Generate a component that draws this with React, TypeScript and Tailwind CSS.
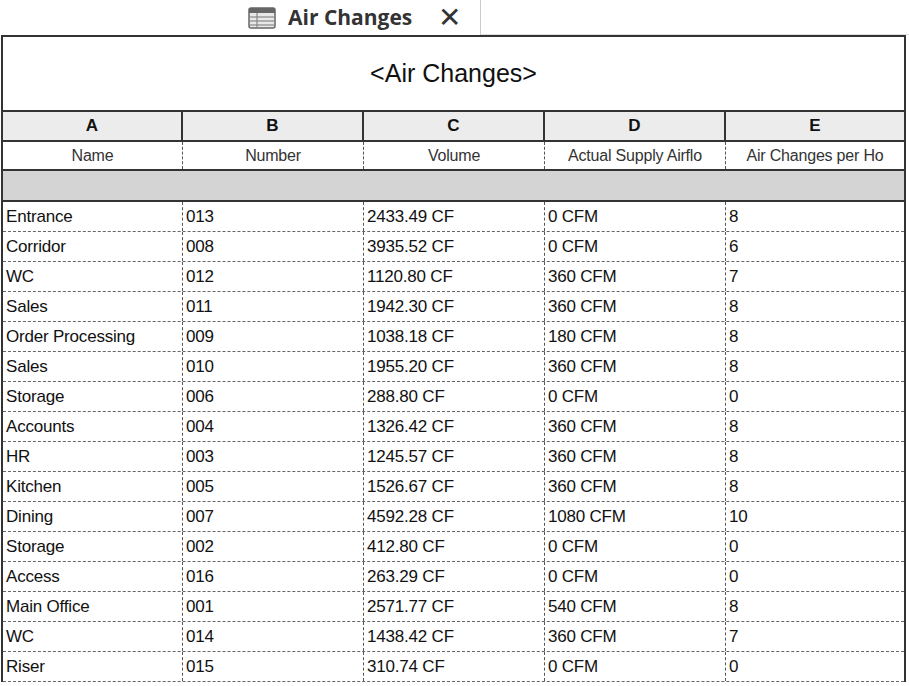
import React from "react";

const rows = [
  ["Entrance","013","2433.49 CF","0 CFM","8"],
  ["Corridor","008","3935.52 CF","0 CFM","6"],
  ["WC","012","1120.80 CF","360 CFM","7"],
  ["Sales","011","1942.30 CF","360 CFM","8"],
  ["Order Processing","009","1038.18 CF","180 CFM","8"],
  ["Sales","010","1955.20 CF","360 CFM","8"],
  ["Storage","006","288.80 CF","0 CFM","0"],
  ["Accounts","004","1326.42 CF","360 CFM","8"],
  ["HR","003","1245.57 CF","360 CFM","8"],
  ["Kitchen","005","1526.67 CF","360 CFM","8"],
  ["Dining","007","4592.28 CF","1080 CFM","10"],
  ["Storage","002","412.80 CF","0 CFM","0"],
  ["Access","016","263.29 CF","0 CFM","0"],
  ["Main Office","001","2571.77 CF","540 CFM","8"],
  ["WC","014","1438.42 CF","360 CFM","7"],
  ["Riser","015","310.74 CF","0 CFM","0"],
];
const grid = "grid grid-cols-[180px_181px_181px_181px_1fr]";

export default function App() {
  return (
    <div className="w-[909px] h-[686px] bg-white overflow-hidden text-[#111]" style={{ fontFamily: '"Liberation Sans", Arial, sans-serif' }}>
      <div className="h-[35px] flex">
        <div className="w-[240px]" />
        <div className="w-[241px] border-r border-[#ccc] flex items-center gap-3 pl-[8px] bg-white">
          <svg width="28" height="22" viewBox="0 0 28 22">
            <rect x="1" y="1" width="26" height="20" rx="2" fill="#e8e8e8" stroke="#666" strokeWidth="1.5" />
            <rect x="1" y="1" width="26" height="5" fill="#666" />
            {[10, 14, 18].map(y => <line key={y} x1="2" x2="26" y1={y} y2={y} stroke="#888" strokeWidth="1.2" />)}
            <line x1="9" x2="9" y1="6" y2="21" stroke="#888" strokeWidth="1.2" />
          </svg>
          <span className="text-[21px] font-bold text-[#333]" style={{ fontFamily: '"Open Sans", sans-serif' }}>Air Changes</span>
          <span className="text-[28px] leading-none text-[#333] ml-[14px]">✕</span>
        </div>
        <div className="flex-1 border-b border-[#ddd]" />
      </div>
      <div className="ml-[1px] w-[905px] border-2 border-[#333] border-b-0">
        <div className="h-[75px] flex items-center justify-center text-[25px] border-b-2 border-[#333]">&lt;Air Changes&gt;</div>
        <div className={grid + " h-[30px] bg-[#ececec] border-b-2 border-[#333]"}>
          {["A","B","C","D","E"].map((l, i) => (
            <div key={l} className={"flex items-center justify-center font-bold text-[17px] " + (i < 4 ? "border-r-2 border-[#333]" : "")}>{l}</div>
          ))}
        </div>
        <div className={grid + " h-[29px] border-b-2 border-[#333]"}>
          {["Name","Number","Volume","Actual Supply Airflo","Air Changes per Ho"].map((h, i) => (
            <div key={h} className={"flex items-center justify-center text-[16px] text-[#333] whitespace-nowrap overflow-hidden tracking-[-0.2px] " + (i < 4 ? "border-r border-dashed border-[#555]" : "")}>{h}</div>
          ))}
        </div>
        <div className="h-[31px] bg-[#d4d4d4] border-b-2 border-[#333]" />
        {rows.map((r, ri) => (
          <div key={ri} className={grid + " h-[30px] border-b border-dashed border-[#666]"}>
            {r.map((c, i) => (
              <div key={i} className={"flex items-center pl-[3px] text-[17px] whitespace-nowrap tracking-[-0.2px] " + (i < 4 ? "border-r border-dashed border-[#555]" : "")}>{c}</div>
            ))}
          </div>
        ))}
      </div>
    </div>
  );
}
